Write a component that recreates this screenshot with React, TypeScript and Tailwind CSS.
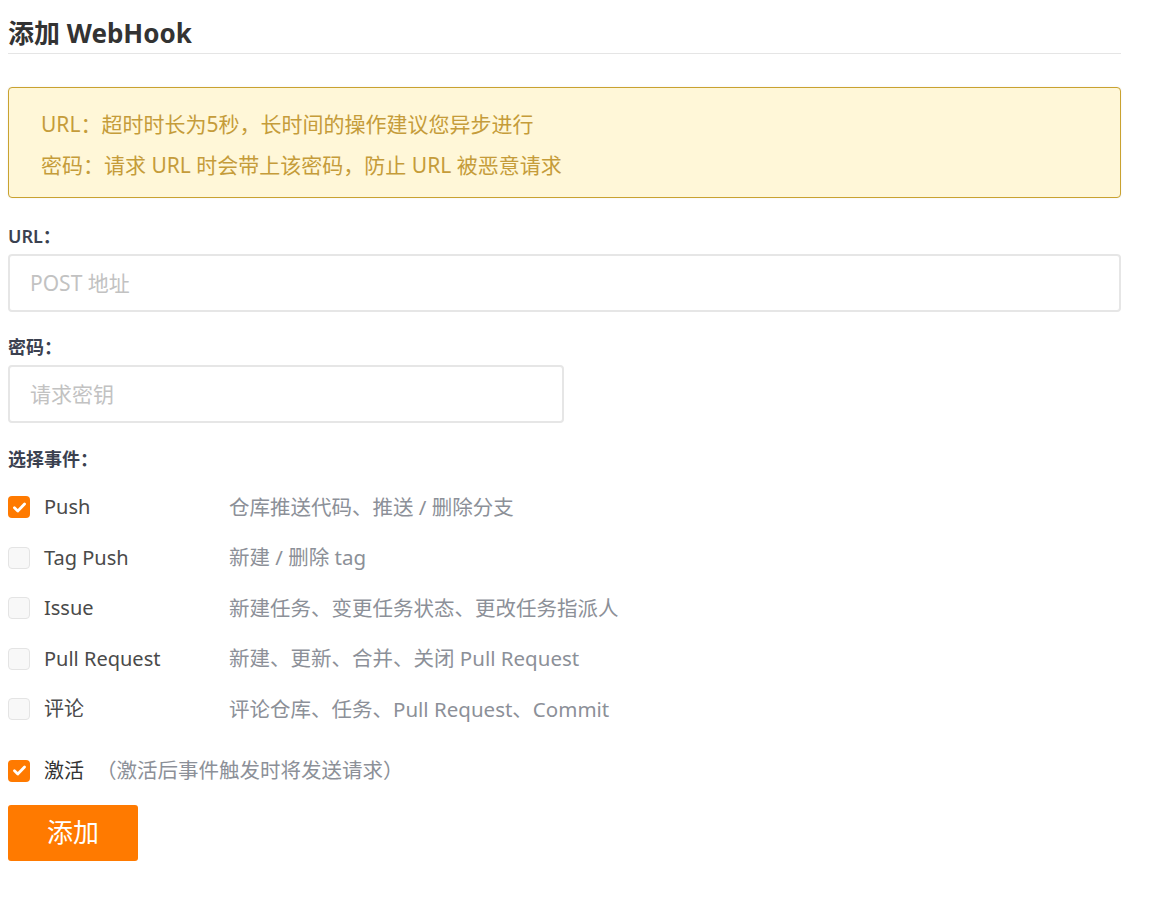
import { useState } from "react";

function CheckBox({ checked, onChange }: { checked: boolean; onChange: () => void }) {
  return (
    <button
      onClick={onChange}
      className={
        checked
          ? "w-[22px] h-[22px] rounded-[4px] bg-[#ff7a00] flex items-center justify-center flex-shrink-0"
          : "w-[22px] h-[22px] rounded-[4px] bg-[#f8f8f8] border border-[#e4e4e4] flex-shrink-0"
      }
    >
      {checked && (
        <svg width="15" height="15" viewBox="0 0 14 14" fill="none">
          <path d="M2.3 7.3l3.1 3L11.7 3.8" stroke="#fff" strokeWidth="2.6" strokeLinecap="round" strokeLinejoin="round" />
        </svg>
      )}
    </button>
  );
}

const events = [
  { name: "Push", desc: "仓库推送代码、推送 / 删除分支", on: true },
  { name: "Tag Push", desc: "新建 / 删除 tag", on: false },
  { name: "Issue", desc: "新建任务、变更任务状态、更改任务指派人", on: false },
  { name: "Pull Request", desc: "新建、更新、合并、关闭 Pull Request", on: false },
  { name: "评论", desc: "评论仓库、任务、Pull Request、Commit", on: false },
];

export default function App() {
  const [checked, setChecked] = useState(events.map((e) => e.on));
  const [active, setActive] = useState(true);

  return (
    <div className="min-h-screen bg-white font-['Noto_Sans','Noto_Sans_CJK_SC',sans-serif]">
      <div className="w-[1113px] ml-[8px]">
        {/* Title */}
        <div className="mt-[13px] h-[41px] border-b border-[#e5e5e5]">
          <h1 className="text-[26px] leading-[40px] font-bold text-[#333]">添加 WebHook</h1>
        </div>

        {/* Notice */}
        <div className="mt-[33px] h-[111px] rounded-[4px] border border-[#c9a230] bg-[#fff7d8] pl-[32px] pt-[16px] text-[21px] leading-[41px] text-[#c59c3a] shadow-[0_0_2px_rgba(0,0,0,0.08)]">
          <p>URL：超时时长为5秒，长时间的操作建议您异步进行</p>
          <p>密码：请求 URL 时会带上该密码，防止 URL 被恶意请求</p>
        </div>

        {/* URL */}
        <label className="block mt-[26px] text-[18px] leading-[24px] font-semibold text-[#3b4150]">URL：</label>
        <input
          placeholder="POST 地址"
          className="mt-[6px] w-full h-[58px] rounded-[4px] border-2 border-[#e6e6e6] px-[20px] text-[21px] text-[#333] placeholder:text-[#c2c2c2] outline-none"
        />

        {/* Password */}
        <label className="block mt-[23px] text-[18px] leading-[24px] font-semibold text-[#3b4150]">密码：</label>
        <input
          placeholder="请求密钥"
          className="mt-[6px] w-[556px] h-[58px] rounded-[4px] border-2 border-[#e6e6e6] px-[20px] text-[21px] text-[#333] placeholder:text-[#c2c2c2] outline-none"
        />

        {/* Events */}
        <label className="block mt-[24px] text-[18px] leading-[24px] font-semibold text-[#3b4150]">选择事件：</label>
        <div className="mt-[11px] flex flex-col">
          {events.map((ev, i) => (
            <div key={ev.name} className="h-[50.5px] flex items-center">
              <CheckBox
                checked={checked[i]}
                onChange={() => setChecked(checked.map((c, j) => (j === i ? !c : c)))}
              />
              <span className="ml-[14px] w-[185px] text-[20px] text-[#4a4a4a]">{ev.name}</span>
              <span className="text-[20.5px] text-[#8c9098]">{ev.desc}</span>
            </div>
          ))}
        </div>

        {/* Active */}
        <div className="mt-[11px] h-[50px] flex items-center">
          <CheckBox checked={active} onChange={() => setActive(!active)} />
          <span className="ml-[14px] text-[20px] text-[#333]">激活</span>
          <span className="ml-[12px] text-[20.5px] text-[#8c9098]">（激活后事件触发时将发送请求）</span>
        </div>

        {/* Submit */}
        <button className="mt-[9px] w-[130px] h-[56px] rounded-[3px] bg-[#ff7a00] text-white text-[26px]">
          添加
        </button>
      </div>
    </div>
  );
}
